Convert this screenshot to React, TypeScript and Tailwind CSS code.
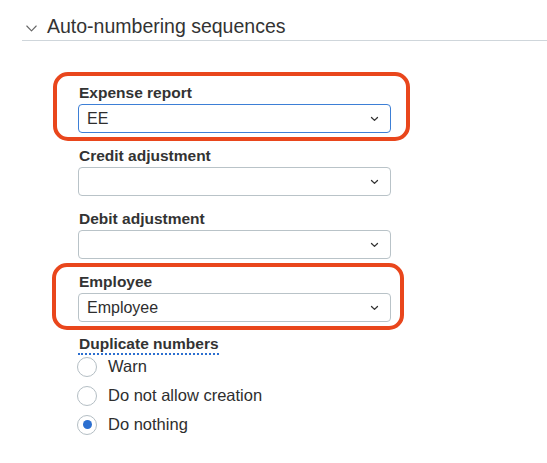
import React from 'react';

interface FieldProps {
    label: string;
    value?: string;
    focused?: boolean;
    marked?: 'first' | 'second';
}

const SmallChevron = () => (
    <svg width="9" height="6" viewBox="0 0 9 6" fill="none">
        <path d="M1.5 1.5 L4.5 4.4 L7.5 1.5" stroke="#333" strokeWidth="1.3" strokeLinecap="round" strokeLinejoin="round" />
    </svg>
);

const Field: React.FC<FieldProps> = ({ label, value, focused, marked }) => (
    <div className="relative">
        <div className="h-[20px] leading-[20px] text-[15.5px] font-semibold text-[#333] pl-[1px]">{label}</div>
        <div
            className={
                'mt-[1px] h-[29px] rounded-[4px] border bg-white flex items-center justify-between pl-[8px] pr-[11px] ' +
                (focused ? 'border-[#3d7fd6]' : 'border-[#b9c3c8]')
            }
        >
            <span className="text-[16px] text-[#2e2e2e]">{value}</span>
            <SmallChevron />
        </div>
        {/* annotation outlines */}
        {marked === 'first' && (
            <div className="absolute -left-[25px] -right-[19px] -top-[11px] -bottom-[8px] border-[4px] border-[#e9461c] rounded-[15px] pointer-events-none" />
        )}
        {marked === 'second' && (
            <div className="absolute -left-[26px] -right-[13px] -top-[9px] -bottom-[8px] border-[4px] border-[#e9461c] rounded-[15px] pointer-events-none" />
        )}
    </div>
);

const Radio: React.FC<{ label: string; checked?: boolean }> = ({ label, checked }) => (
    <div className="h-[29px] flex items-center">
        <div className="-ml-[1px] w-[20px] h-[20px] rounded-full border border-[#b4bec4] bg-white flex items-center justify-center">
            {checked && <div className="w-[9px] h-[9px] rounded-full bg-[#2c6fd0]" />}
        </div>
        <span className="ml-[11px] text-[16.5px] text-[#2e2e2e]">{label}</span>
    </div>
);

export default function App() {
    return (
        <div className="w-[547px] h-[463px] bg-white overflow-hidden font-['Liberation_Sans',Arial,sans-serif]">
            {/* Section header */}
            <div className="ml-[22px] pt-[14px] border-b border-[#cfd6db]">
                <div className="flex items-center h-[24px] pl-[4px] mb-[2px]">
                    <svg width="11" height="7" viewBox="0 0 11 7" fill="none" className="mt-[4px]">
                        <path d="M0.8 1 L5.5 5.8 L10.2 1" stroke="#666" strokeWidth="1.1" strokeLinecap="round" strokeLinejoin="round" />
                    </svg>
                    <span className="ml-[10px] text-[19.5px] leading-[24px] text-[#333]">Auto-numbering sequences</span>
                </div>
            </div>

            <div className="ml-[78px] w-[313px] pt-[42px] flex flex-col gap-[13px]">
                <Field label="Expense report" value="EE" focused marked="first" />
                <Field label="Credit adjustment" />
                <Field label="Debit adjustment" />
                <Field label="Employee" value="Employee" marked="second" />
            </div>

            <div className="ml-[78px] mt-[10px]">
                <span className="inline-block pl-[1px] text-[15.5px] leading-[19px] font-semibold text-[#333] border-b-2 border-dotted border-[#2c6fd0]">
                    Duplicate numbers
                </span>
                <div className="-mt-[4px]">
                    <Radio label="Warn" />
                    <Radio label="Do not allow creation" />
                    <Radio label="Do nothing" checked />
                </div>
            </div>
        </div>
    );
}
